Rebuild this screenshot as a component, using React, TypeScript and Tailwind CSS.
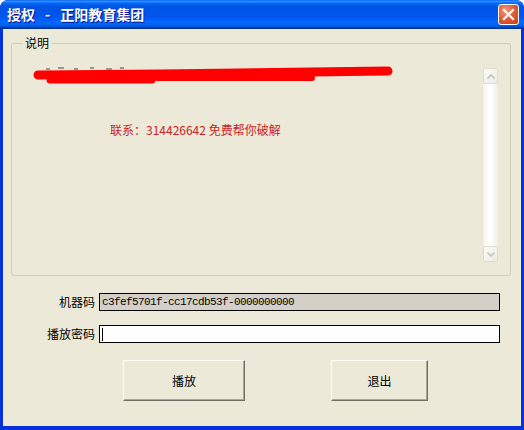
import React from 'react';

const cjk = "font-['SimSun','Noto_Sans_CJK_SC',sans-serif]";

function CloseButton() {
  return (
    <div className="w-[21px] h-[21px] rounded-[3px] border border-white bg-[radial-gradient(circle_at_35%_30%,#f29a7c_0%,#e0603c_45%,#c53a17_100%)] flex items-center justify-center">
      <svg width="13" height="13" viewBox="0 0 13 13">
        <path d="M2 2 L11 11 M11 2 L2 11" stroke="#ffffff" strokeWidth="2.2" strokeLinecap="square" />
      </svg>
    </div>
  );
}

function ScrollArrow({ up }: { up?: boolean }) {
  return (
    <div className="w-[15px] h-[16px] shrink-0 rounded-[2px] border border-[#dedcd2] bg-[linear-gradient(to_bottom_right,#fbfbf8,#ecebe3)] flex items-center justify-center">
      <svg width="8" height="5" viewBox="0 0 8 5">
        <path d={up ? 'M0.5 4.5 L4 1 L7.5 4.5' : 'M0.5 0.5 L4 4 L7.5 0.5'} fill="none" stroke="#c5c4bc" strokeWidth="1.6" />
      </svg>
    </div>
  );
}

function XpButton({ label, width }: { label: string; width: string }) {
  return (
    <button
      className={`${width} h-[41px] bg-[#ece9d8] border border-t-white border-l-white border-r-[#716f64] border-b-[#716f64] shadow-[inset_-1px_-1px_0_#aca899] text-[12px] text-black ${cjk}`}
    >
      {label}
    </button>
  );
}

export default function App() {
  return (
    <div className="w-[524px] h-[430px] bg-[#0831d9] rounded-t-[8px] flex flex-col overflow-hidden">
      {/* title bar */}
      <div className="h-[29px] shrink-0 rounded-t-[8px] bg-[linear-gradient(to_bottom,#0058ee_0%,#3593ff_4%,#288eff_6%,#127dff_8%,#036ffc_10%,#0262ee_14%,#0057e5_20%,#0054e3_24%,#0055eb_56%,#005bf5_66%,#026afe_76%,#0062ef_86%,#0052d6_92%,#0040ab_94%,#003092_100%)] flex items-center justify-between pl-[7px] pr-[5px]">
        <span className={`text-white font-bold text-[14px] [text-shadow:1px_1px_#0f1089] ${cjk}`}>
          授权<span className="mx-[10px]">-</span>正阳教育集团
        </span>
        <CloseButton />
      </div>

      {/* client area */}
      <div className="flex-1 mx-[3px] mb-[4px] bg-[#ece9d8] flex flex-col">
        <fieldset className="ml-[8px] mt-[7px] w-[500px] h-[240px] border border-[#d0cebf] rounded-[3px]">
          <legend className={`ml-[10px] px-[3px] text-[12px] leading-[14px] text-black ${cjk}`}>说明</legend>
          <div className="flex h-[194px] ml-[10px] mr-[12px] mt-[18px]">
            <div className="flex-1 flex flex-col">
              <svg width="380" height="20" viewBox="0 0 380 20" className="-mt-[2px]">
                <path d="M24 3 L28 3 M36 2 L42 2 M52 3 L56 3 M68 2 L72 2 M84 3 L90 3 M98 2 L102 2" stroke="#444" strokeWidth="1" />
                <path d="M16 9 L140 8 L366 5" fill="none" stroke="#ff0000" strokeWidth="9" strokeLinecap="round" strokeLinejoin="round" />
                <path d="M28 14 L130 14" stroke="#ff0000" strokeWidth="7" strokeLinecap="round" />
                <path d="M135 12 L290 12" stroke="#ff0000" strokeWidth="6" strokeLinecap="round" />
              </svg>
              <p className={`mt-[37px] pl-[88px] text-[12px] leading-[14px] text-[#c82424] ${cjk}`}>
                联系：314426642 免费帮你破解
              </p>
            </div>
            <div className="w-[15px] flex flex-col bg-[linear-gradient(to_right,#f3f1e7,#ffffff_40%,#fdfdfa_60%,#eeede4)]">
              <ScrollArrow up />
              <div className="flex-1" />
              <ScrollArrow />
            </div>
          </div>
        </fieldset>

        <div className="mt-[17px] flex items-center">
          <span className={`w-[92px] text-right text-[12px] text-black ${cjk}`}>机器码</span>
          <div className="ml-[4px] w-[401px] h-[18px] border border-black bg-[#d4d0c8] flex items-center px-[2px] font-['Liberation_Mono',monospace] text-[11px] tracking-[-0.6px] text-black">
            c3fef5701f-cc17cdb53f-0000000000
          </div>
        </div>
        <div className="mt-[14px] flex items-center">
          <span className={`w-[92px] text-right text-[12px] text-black ${cjk}`}>播放密码</span>
          <div className="ml-[4px] w-[401px] h-[18px] border border-black bg-white flex items-center pl-[2px]">
            <div className="w-px h-[13px] bg-black" />
          </div>
        </div>

        <div className="mt-[17px] flex pl-[120px] gap-[86px]">
          <XpButton label="播放" width="w-[122px]" />
          <XpButton label="退出" width="w-[97px]" />
        </div>
      </div>
    </div>
  );
}
